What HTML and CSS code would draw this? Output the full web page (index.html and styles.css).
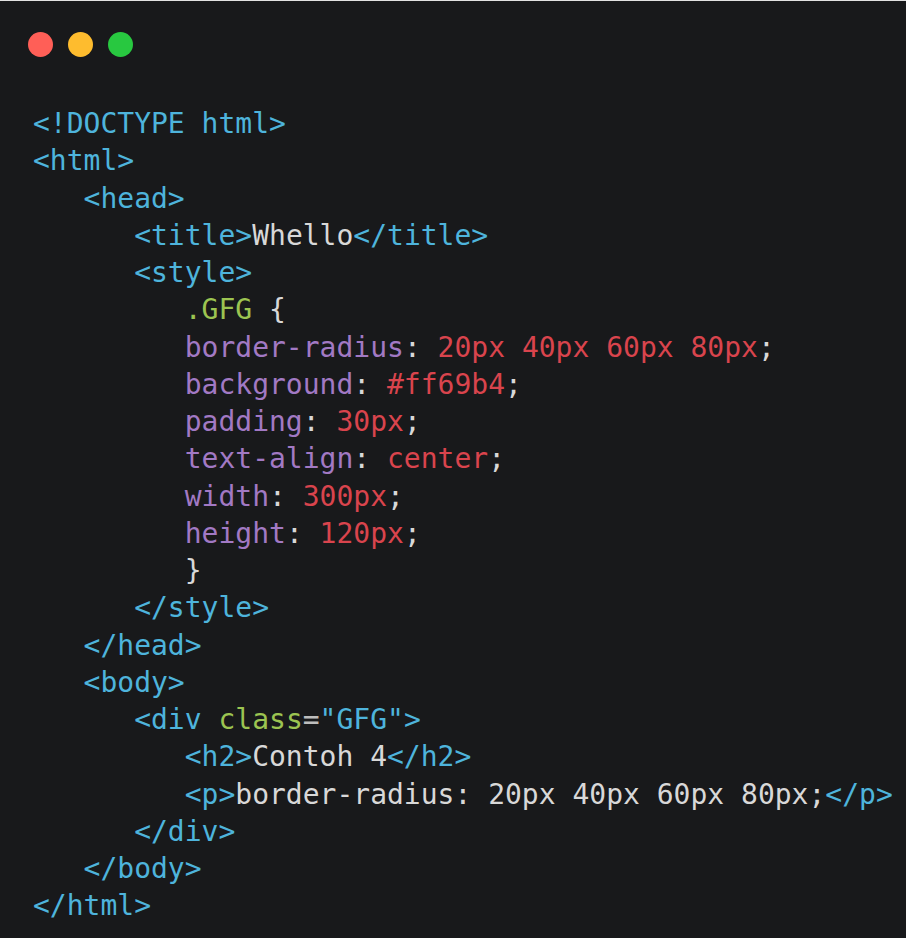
FILE: index.html
```html
<!DOCTYPE html>
<html>
<head>
<meta charset="utf-8">
<title>Code</title>
<link rel="stylesheet" href="styles.css">
</head>
<body>
<div class="window">
  <div class="dots">
    <span class="dot red"></span>
    <span class="dot yellow"></span>
    <span class="dot green"></span>
  </div>
<pre class="code"><span class="t">&lt;!DOCTYPE html&gt;</span>
<span class="t">&lt;html&gt;</span>
   <span class="t">&lt;head&gt;</span>
      <span class="t">&lt;title&gt;</span><span class="x">Whello</span><span class="t">&lt;/title&gt;</span>
      <span class="t">&lt;style&gt;</span>
         <span class="s">.GFG</span> <span class="x">{</span>
         <span class="p">border-radius</span><span class="x">:</span> <span class="v">20px 40px 60px 80px</span><span class="x">;</span>
         <span class="p">background</span><span class="x">:</span> <span class="v">#ff69b4</span><span class="x">;</span>
         <span class="p">padding</span><span class="x">:</span> <span class="v">30px</span><span class="x">;</span>
         <span class="p">text-align</span><span class="x">:</span> <span class="v">center</span><span class="x">;</span>
         <span class="p">width</span><span class="x">:</span> <span class="v">300px</span><span class="x">;</span>
         <span class="p">height</span><span class="x">:</span> <span class="v">120px</span><span class="x">;</span>
         <span class="x">}</span>
      <span class="t">&lt;/style&gt;</span>
   <span class="t">&lt;/head&gt;</span>
   <span class="t">&lt;body&gt;</span>
      <span class="t">&lt;div</span> <span class="s">class</span><span class="e">=</span><span class="t">"GFG"&gt;</span>
         <span class="t">&lt;h2&gt;</span><span class="x">Contoh 4</span><span class="t">&lt;/h2&gt;</span>
         <span class="t">&lt;p&gt;</span><span class="x">border-radius: 20px 40px 60px 80px;</span><span class="t">&lt;/p&gt;</span>
      <span class="t">&lt;/div&gt;</span>
   <span class="t">&lt;/body&gt;</span>
<span class="t">&lt;/html&gt;</span></pre>
</div>
</body>
</html>
```

FILE: styles.css
```css
html, body {
  margin: 0;
  padding: 0;
  background: #18191b;
}

.window {
  min-height: 938px;
  box-sizing: border-box;
  border-top: 1px solid #e2e2e2;
  background: #18191b;
  padding: 31px 0 0 28px;
}

.dots {
  display: flex;
  gap: 15px;
  height: 25px;
}

.dot {
  width: 25px;
  height: 25px;
  border-radius: 50%;
}

.red { background: #ff5f57; }
.yellow { background: #febc2e; }
.green { background: #28c840; }

.code {
  margin: 48px 0 0 5px;
  font-family: "DejaVu Sans Mono", monospace;
  font-size: 28px;
  line-height: 37.25px;
  color: #d8d8d8;
  white-space: pre;
}

.t { color: #4eb4dc; }
.x { color: #d8d8d8; }
.s { color: #9cc451; }
.p { color: #a279c4; }
.v { color: #d9444d; }
.e { color: #bdbdbd; }
```
